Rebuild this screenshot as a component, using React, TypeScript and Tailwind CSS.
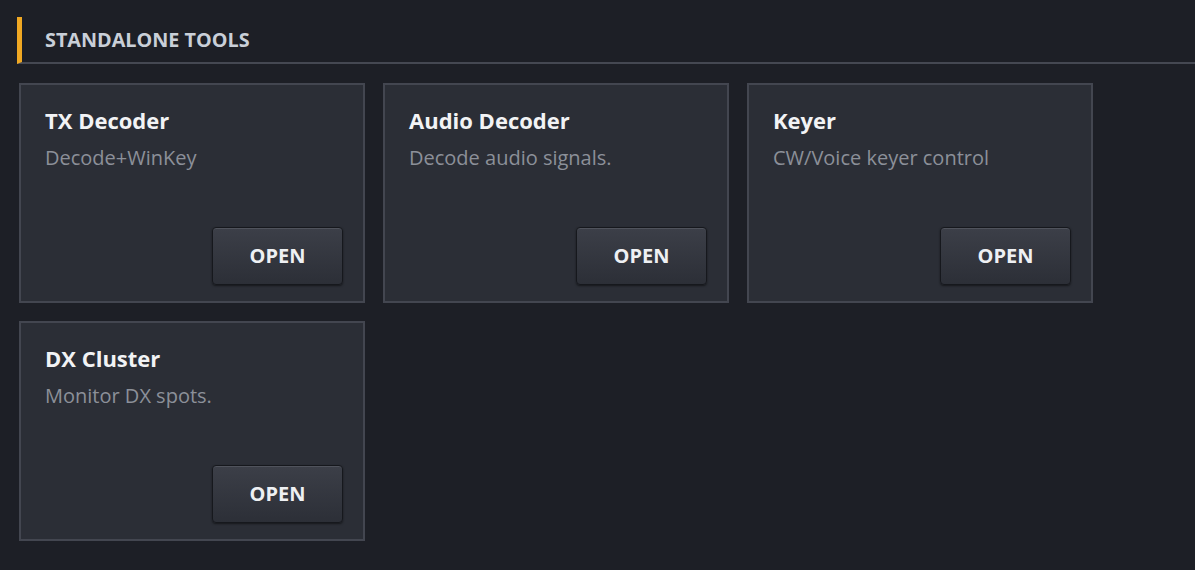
import React from "react";

interface Tool {
  name: string;
  desc: string;
}

const tools: Tool[] = [
  { name: "TX Decoder", desc: "Decode+WinKey" },
  { name: "Audio Decoder", desc: "Decode audio signals." },
  { name: "Keyer", desc: "CW/Voice keyer control" },
  { name: "DX Cluster", desc: "Monitor DX spots." },
];

function ToolCard({ tool }: { tool: Tool }) {
  return (
    <div className="flex flex-col h-[220px] bg-[#2b2e36] border-2 border-[#434650] pl-[24px] pr-[20px] pt-[20px] pb-[16px]">
      <h4 className="text-[22px] leading-[30px] font-bold text-[#f2f3f5]">{tool.name}</h4>
      <p className="mt-[9px] text-[20px] leading-[28px] text-[#8c9099]">{tool.desc}</p>
      <div className="mt-auto flex justify-end">
        <button className="w-[131px] h-[58px] rounded-[4px] border border-[#16181d] bg-gradient-to-b from-[#3c3f48] to-[#2c2f37] shadow-[inset_0_1px_0_#50535c,0_1px_2px_rgba(0,0,0,0.5)] text-[20px] font-bold text-[#eef0f3]">
          OPEN
        </button>
      </div>
    </div>
  );
}

export default function App() {
  return (
    <div
      className="w-[1195px] h-[570px] bg-[#1d1f26] pt-[17px] pl-[17px] overflow-hidden"
      style={{ fontFamily: '"Open Sans", "Noto Sans", sans-serif' }}
    >
      <div className="h-[47px] flex items-center border-l-[5px] border-l-[#f0a823] border-b-2 border-b-[#454852] pl-[23px]">
        <h3 className="text-[19.8px] font-bold text-[#c9cfd8]">STANDALONE TOOLS</h3>
      </div>
      <div className="mt-[19px] ml-[2px] grid grid-cols-[346px_346px_346px] gap-[18px]">
        {tools.map((tool) => (
          <ToolCard key={tool.name} tool={tool} />
        ))}
      </div>
    </div>
  );
}
